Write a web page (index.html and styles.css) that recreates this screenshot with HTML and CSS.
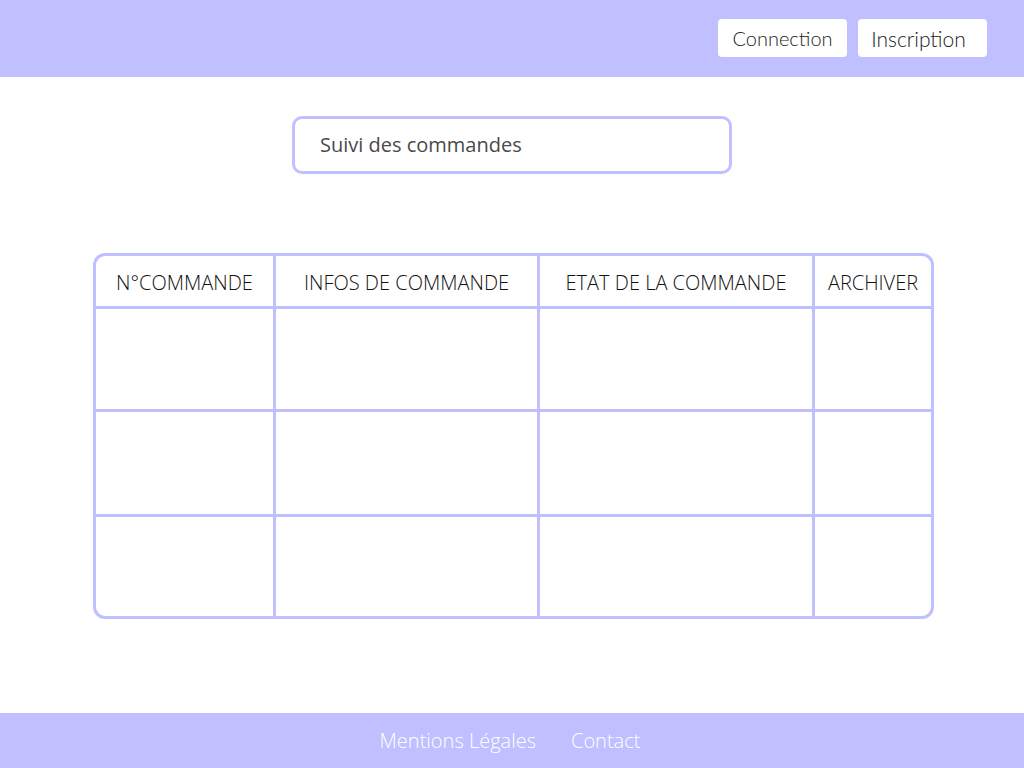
FILE: index.html
```html
<!DOCTYPE html>
<html lang="fr">
<head>
<meta charset="utf-8">
<title>Suivi des commandes</title>
<link rel="stylesheet" href="styles.css">
</head>
<body>
<div class="page">
  <header class="topbar">
    <button class="btn">Connection</button>
    <button class="btn btn-alt">Inscription</button>
  </header>
  <main class="content">
    <div class="search">Suivi des commandes</div>
    <div class="table-wrap">
      <table class="orders">
        <thead>
          <tr>
            <th class="c1">N°COMMANDE</th>
            <th class="c2">INFOS DE COMMANDE</th>
            <th class="c3">ETAT DE LA COMMANDE</th>
            <th class="c4">ARCHIVER</th>
          </tr>
        </thead>
        <tbody>
          <tr class="r1"><td></td><td></td><td></td><td></td></tr>
          <tr class="r2"><td></td><td></td><td></td><td></td></tr>
          <tr class="r3"><td></td><td></td><td></td><td></td></tr>
        </tbody>
      </table>
    </div>
  </main>
  <footer class="footer">
    <a class="flink" href="#">Mentions Légales</a>
    <a class="flink" href="#">Contact</a>
  </footer>
</div>
</body>
</html>
```

FILE: styles.css
```css
* { box-sizing: border-box; }
html, body { margin: 0; padding: 0; background: #ffffff; }
body { font-family: "Open Sans", "Liberation Sans", sans-serif; }

.page {
  min-height: 768px;
  display: flex;
  flex-direction: column;
}

.topbar {
  height: 77px;
  background: #c0bfff;
  display: flex;
  justify-content: flex-end;
  align-items: center;
  gap: 11px;
  padding-right: 37px;
}

.btn {
  width: 129px;
  height: 38px;
  border: none;
  border-radius: 4px;
  background: #ffffff;
  font-family: "Lato", "Open Sans", sans-serif;
  font-size: 20px;
  font-weight: 300;
  color: #222222;
  padding: 0;
  margin-bottom: 1px;
}

.btn-alt {
  font-size: 21px;
  padding-right: 8px;
}

.content {
  flex: 1;
  display: flex;
  flex-direction: column;
}

.search {
  width: 440px;
  height: 58px;
  margin: 39px 0 0 292px;
  border: 3px solid #c0bfff;
  border-radius: 10px;
  padding-left: 25px;
  padding-bottom: 2px;
  display: flex;
  align-items: center;
  font-size: 20px;
  font-weight: 400;
  color: #4a4a4a;
}

.table-wrap {
  width: 841px;
  height: 366px;
  margin: 79px 0 0 93px;
  border: 3px solid #c0bfff;
  border-radius: 12px;
  overflow: hidden;
}

.orders {
  border-collapse: separate;
  border-spacing: 0;
  width: 835px;
  table-layout: fixed;
}

.orders th, .orders td {
  border-right: 3px solid #c0bfff;
  border-bottom: 3px solid #c0bfff;
  padding: 0;
}
.orders th:last-child, .orders td:last-child { border-right: none; }
.orders tbody tr:last-child td { border-bottom: none; }

.orders th {
  height: 53px;
  font-weight: 300;
  font-size: 20px;
  color: #111111;
  text-align: center;
  padding-top: 2px;
}

.c1 { width: 180px; }
.c2 { width: 264px; }
.c3 { width: 275px; }
.c4 { width: 116px; }

.r1 td { height: 103px; }
.r2 td { height: 105px; }
.r3 td { height: 100px; }

.footer {
  height: 55px;
  background: #c0bfff;
  display: flex;
  justify-content: center;
  align-items: center;
  gap: 35px;
  padding-right: 4px;
}

.flink {
  color: #ffffff;
  text-decoration: none;
  font-weight: 300;
  font-size: 20px;
}
```
